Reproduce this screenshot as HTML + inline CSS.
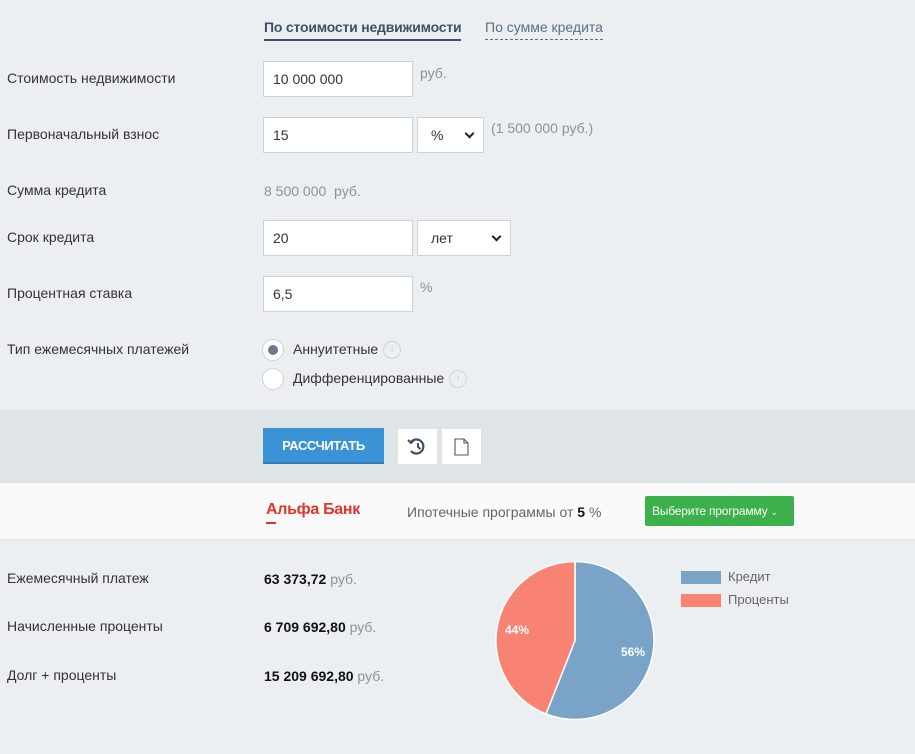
<!DOCTYPE html>
<html><head><meta charset="utf-8"><style>
*{box-sizing:border-box;margin:0;padding:0}
body{width:915px;height:754px;background:#eceff1;font-family:"Liberation Sans",sans-serif;font-size:14px;color:#333;position:relative;overflow:hidden}
.a{position:absolute;white-space:nowrap}
.inp{position:absolute;background:#fff;border:1px solid #ccd3d8;height:36px;padding:9px 9px;font-size:14px;color:#333}
.sel{position:absolute;background:#fff;border:1px solid #ccd3d8;height:36px;padding:9px 13px;font-size:14px}
.sel:after{content:"";position:absolute;right:10px;top:12px;width:5px;height:5px;border-right:2px solid #222;border-bottom:2px solid #222;transform:rotate(45deg)}
.g{color:#8a9399}
.lab{position:absolute;left:7px;color:#333}
.info{display:inline-block;width:18px;height:18px;border:1.5px solid #cfd5d9;border-radius:50%;color:#cfd5d9;font-size:11px;text-align:center;line-height:15px;vertical-align:middle;margin-left:5px;font-family:"Liberation Serif",serif}
</style></head><body>
<div class="a" style="left:264px;top:19px;font-weight:bold;color:#3d5068;font-size:14px;border-bottom:2px solid #3d5068;padding-bottom:4px;letter-spacing:-0.2px">По стоимости недвижимости</div>
<div class="a" style="left:485px;top:19px;color:#5c6f82;font-size:14px;border-bottom:1px dashed #5c6f82;padding-bottom:4px">По сумме кредита</div>

<div class="lab" style="top:70px">Стоимость недвижимости</div>
<div class="inp" style="left:263px;top:61px;width:150px">10 000 000</div>
<div class="a g" style="left:420px;top:65px">руб.</div>

<div class="lab" style="top:126px">Первоначальный взнос</div>
<div class="inp" style="left:263px;top:117px;width:150px">15</div>
<div class="sel" style="left:417px;top:117px;width:67px">%</div>
<div class="a g" style="left:491px;top:120px">(1 500 000 руб.)</div>

<div class="lab" style="top:182px">Сумма кредита</div>
<div class="a g" style="left:264px;top:183px">8 500 000&nbsp; руб.</div>

<div class="lab" style="top:229px">Срок кредита</div>
<div class="inp" style="left:263px;top:220px;width:150px">20</div>
<div class="sel" style="left:417px;top:220px;width:94px">лет</div>

<div class="lab" style="top:285px">Процентная ставка</div>
<div class="inp" style="left:263px;top:276px;width:150px">6,5</div>
<div class="a g" style="left:420px;top:279px">%</div>

<div class="lab" style="top:341px">Тип ежемесячных платежей</div>
<div class="a" style="left:262px;top:339px;width:22px;height:22px;border-radius:50%;background:#fff;border:1px solid #ccd3d8"><div style="position:absolute;left:5px;top:5px;width:10px;height:10px;border-radius:50%;background:#6c7a8c"></div></div>
<div class="a" style="left:293px;top:341px">Аннуитетные<span class="info">i</span></div>
<div class="a" style="left:262px;top:368px;width:22px;height:22px;border-radius:50%;background:#fff;border:1px solid #ccd3d8"></div>
<div class="a" style="left:293px;top:370px">Дифференцированные<span class="info">i</span></div>

<div class="a" style="left:0;top:410px;width:915px;height:73px;background:#dfe4e7"></div>
<div class="a" style="left:263px;top:428px;width:121px;height:36px;background:#3a93d6;border-bottom:2px solid #2d7bbb;color:#fff;font-weight:bold;font-size:13px;text-align:center;line-height:36px;letter-spacing:-0.4px">РАССЧИТАТЬ</div>
<div class="a" style="left:398px;top:429px;width:39px;height:35px;background:#fff">
<svg width="39" height="35"><path d="M13 13a7 7 0 1 1 0 9" stroke="#3d5068" stroke-width="2.2" fill="none"/><path d="M10 11l3 3 3-3" stroke="#3d5068" stroke-width="2" fill="none"/><path d="M20 14v4l2.5 2" stroke="#3d5068" stroke-width="2" fill="none"/></svg></div>
<div class="a" style="left:442px;top:429px;width:39px;height:35px;background:#fff">
<svg width="39" height="35"><path d="M13 10h9l4 4v12h-13z M22 10v4h4" stroke="#555" stroke-width="1.1" fill="none"/></svg></div>

<div class="a" style="left:0;top:483px;width:915px;height:57px;background:#fafafa;border-bottom:1px solid #e3e7ea"></div>
<div class="a" style="left:266px;top:501px;color:#e0352b;font-weight:bold;font-size:16px;letter-spacing:-0.3px">Альфа Банк</div>
<div class="a" style="left:266px;top:522px;width:10px;height:2px;background:#e0352b"></div>
<div class="a" style="left:407px;top:504px;color:#666;font-size:14px">Ипотечные программы от <b style="color:#111">5</b> %</div>
<div class="a" style="left:645px;top:496px;width:149px;height:30px;background:#3cb04b;border-radius:2px;color:#fff;font-size:12px;line-height:30px;padding-left:7px;letter-spacing:-0.2px">Выберите программу <span style="font-size:9px">&#8964;</span></div>

<div class="lab" style="top:570px">Ежемесячный платеж</div>
<div class="a" style="left:264px;top:571px;font-size:14px"><b style="color:#111">63 373,72</b> <span class="g">руб.</span></div>
<div class="lab" style="top:618px">Начисленные проценты</div>
<div class="a" style="left:264px;top:619px;font-size:14px"><b style="color:#111">6 709 692,80</b> <span class="g">руб.</span></div>
<div class="lab" style="top:667px">Долг + проценты</div>
<div class="a" style="left:264px;top:668px;font-size:14px"><b style="color:#111">15 209 692,80</b> <span class="g">руб.</span></div>

<svg class="a" style="left:0;top:0" width="915" height="754">
<path d="M575 640.5 L575 561.5 A79 79 0 1 1 546 714 Z" fill="#79a4c8" stroke="#fff" stroke-width="1.5"/>
<path d="M575 640.5 L546 714 A79 79 0 0 1 575 561.5 Z" fill="#f98373" stroke="#fff" stroke-width="1.5"/>
<text x="621" y="656" fill="#fff" font-size="12" font-weight="bold" font-family="Liberation Sans">56%</text>
<text x="505" y="634" fill="#fff" font-size="12" font-weight="bold" font-family="Liberation Sans">44%</text>
<rect x="681" y="571" width="40" height="13" fill="#79a4c8"/>
<rect x="681" y="594" width="40" height="13" fill="#f98373"/>
<text x="728" y="581" fill="#666" font-size="13" font-family="Liberation Sans">Кредит</text>
<text x="728" y="604" fill="#666" font-size="13" font-family="Liberation Sans">Проценты</text>
</svg>
</body></html>
